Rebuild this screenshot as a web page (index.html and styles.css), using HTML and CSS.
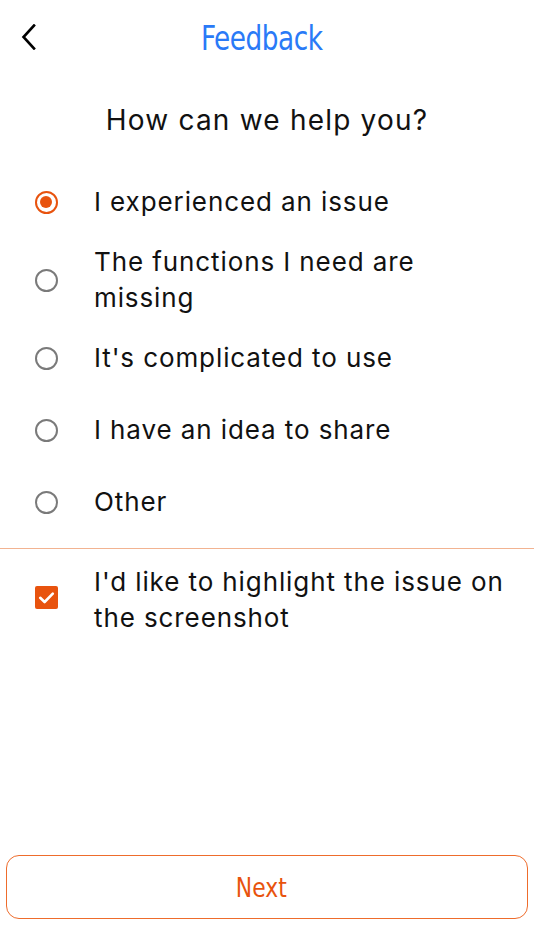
FILE: index.html
```html
<!DOCTYPE html>
<html>
<head>
<meta charset="utf-8">
<link rel="stylesheet" href="styles.css">
</head>
<body>
<div class="screen">
  <header class="topbar">
    <button class="back" aria-label="Back">
      <svg width="16" height="26" viewBox="0 0 16 26"><path d="M13 1.5 L2.5 13 L13 24.5" fill="none" stroke="#000" stroke-width="2.6" stroke-linecap="square"/></svg>
    </button>
    <h1 class="title">Feedback</h1>
  </header>
  <h2 class="question">How can we help you?</h2>
  <ul class="options">
    <li class="option"><span class="radio checked"></span><span class="label">I experienced an issue</span></li>
    <li class="option"><span class="radio"></span><span class="label">The functions I need are missing</span></li>
    <li class="option"><span class="radio"></span><span class="label">It's complicated to use</span></li>
    <li class="option"><span class="radio"></span><span class="label">I have an idea to share</span></li>
    <li class="option"><span class="radio"></span><span class="label">Other</span></li>
  </ul>
  <div class="divider"></div>
  <div class="check-row">
    <span class="checkbox">
      <svg width="23" height="23" viewBox="0 0 23 23"><path d="M5.2 11.8 L9.6 16 L17.8 7.6" fill="none" stroke="#fff" stroke-width="2.6" stroke-linecap="round" stroke-linejoin="round"/></svg>
    </span>
    <span class="label">I'd like to highlight the issue on the screenshot</span>
  </div>
  <div class="spacer"></div>
  <button class="next"><span class="next-text">Next</span></button>
</div>
</body>
</html>
```
FILE: styles.css
```css
* { box-sizing: border-box; }
html, body { margin: 0; padding: 0; background: #fff; }
body { font-family: Inter, "Liberation Sans", Arial, sans-serif; color: #111; }
.screen { width: 534px; height: 950px; display: flex; flex-direction: column; }
.topbar { height: 76px; display: flex; align-items: center; justify-content: center; position: relative; }
.back { position: absolute; left: 16px; top: 22px; background: none; border: 0; padding: 0; width: 26px; height: 30px; display: flex; align-items: center; justify-content: center; }
.title { margin: 0 10px 0 0; font-family: "DejaVu Sans Condensed", "DejaVu Sans", sans-serif; font-weight: 500; font-size: 34px; color: #2A7AF7; letter-spacing: -0.5px; transform: scaleX(0.86); }
.question { margin: 22px 0 0; height: 44px; text-align: center; font-weight: normal; font-size: 28px; line-height: 44px; letter-spacing: 1.2px; color: #111; }
.options { list-style: none; margin: 24px 0 0; padding: 0; display: flex; flex-direction: column; }
.option { display: flex; align-items: center; min-height: 72px; padding: 6px 22px 6px 35px; }
.label { font-size: 26px; line-height: 36px; letter-spacing: 0.9px; color: #111; padding-left: 36px; }
.radio { flex: none; width: 23px; height: 23px; border-radius: 50%; border: 2.5px solid #7a7a7a; position: relative; }
.radio.checked { border-color: #E8530E; }
.radio.checked::after { content: ""; position: absolute; left: 3px; top: 3px; width: 12px; height: 12px; border-radius: 50%; background: #E8530E; }
.divider { height: 1px; background: #F2B391; margin-top: 10px; }
.check-row { display: flex; align-items: center; padding: 15px 22px 0 35px; }
.checkbox { flex: none; width: 23px; height: 23px; background: #E8530E; border-radius: 2px; display: flex; margin-top: -6px; }
.spacer { flex: 1; }
.next { margin: 0 6px 31px; height: 64px; border: 1.5px solid #EE6C2C; border-radius: 13px; background: #fff; color: #E8530E; font-family: "DejaVu Sans Condensed", "DejaVu Sans", sans-serif; font-size: 27px; display: flex; align-items: center; justify-content: center; padding: 0 12px 0 0; }
.next-text { display: inline-block; transform: scaleX(0.9); }
```
